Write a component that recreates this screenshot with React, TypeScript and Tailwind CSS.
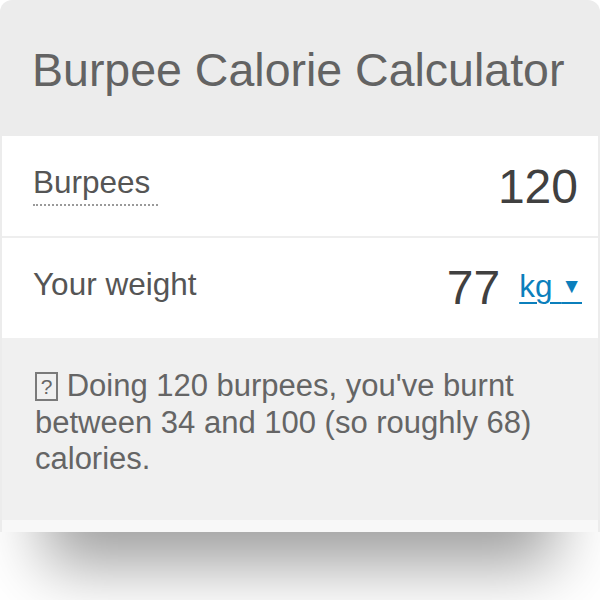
import React from "react";

const font = { fontFamily: '"Liberation Sans", Arial, Helvetica, sans-serif' };

function Row({ children, divider }: { children: React.ReactNode; divider?: boolean }) {
  return (
    <div
      className={`flex items-start justify-between bg-white ${
        divider ? "h-[102px] border-t-2 border-[#eeeeee]" : "h-[100px]"
      }`}
    >
      {children}
    </div>
  );
}

export default function App() {
  return (
    <div className="min-h-[600px] w-[600px] bg-white" style={font}>
      <div className="w-[600px] rounded-t-[12px] bg-[#ececec] px-[2px] shadow-[0_78px_60px_-45px_rgba(0,0,0,0.38)]">
        {/* header */}
        <div className="h-[136px] pl-[30px] pt-[47px]">
          <h1 className="text-[46.5px] leading-[46px] font-normal text-[#636363]">
            Burpee Calorie Calculator
          </h1>
        </div>

        {/* inputs */}
        <Row>
          <div className="mt-[31px] pl-[31px]">
            <span className="inline-block border-b-2 border-dotted border-[#9a9a9a] pb-[5px] pr-[8px] text-[31.5px] leading-[31.5px] text-[#555555]">
              Burpees
            </span>
          </div>
          <div className="mt-[27px] pr-[20px] text-[48px] leading-[48px] text-[#404040]">120</div>
        </Row>
        <Row divider>
          <div className="mt-[31px] pl-[31px] text-[31.5px] leading-[31.5px] text-[#555555]">
            Your weight
          </div>
          <div className="flex items-start pr-[16px]">
            <div className="mt-[26px] text-[48px] leading-[48px] text-[#404040]">77</div>
            <a
              href="#"
              className="ml-[19px] mt-[32px] text-[31.5px] leading-[31.5px] text-[#0b7fbc] underline decoration-2 underline-offset-[5px]"
            >
              kg <span className="align-[4px] text-[21px]">▼</span>
            </a>
          </div>
        </Row>

        {/* result */}
        <div className="h-[182px] bg-[#f0f0f0] pl-[33px] pr-[30px] pt-[30px] text-[31px] leading-[36.7px] text-[#656565]">
          <p>
            <span className="inline-block h-[29px] w-[23px] overflow-hidden border-2 border-[#7a7a7a] text-center align-[-5px] text-[21px] leading-[25px] text-[#666666]">
              ?
            </span>{" "}
            Doing 120 burpees, you've burnt between 34 and 100 (so roughly 68) calories.
          </p>
        </div>
        <div className="h-[12px] bg-[#f8f8f8]" />
      </div>
    </div>
  );
}
